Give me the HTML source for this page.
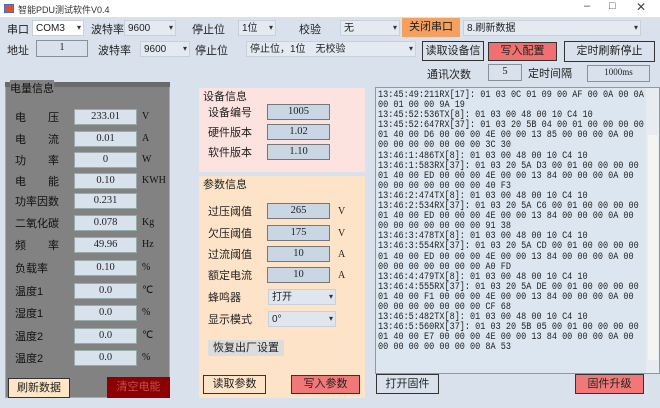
<!DOCTYPE html><html><head><meta charset="utf-8"><style>
*{box-sizing:border-box;margin:0;padding:0}
body{width:660px;height:408px;overflow:hidden;background:#d9e2ec;font-family:"Liberation Sans","Noto Sans CJK SC",sans-serif;font-size:11px;color:#222;position:relative}
.a{position:absolute}
.t{position:absolute;white-space:nowrap}
.cb{position:absolute;background:#e4eaf2;border:1px solid #c8d0da;height:16px;font-size:10px;padding:1px 3px;line-height:13px}
.cb:after{content:"▾";position:absolute;right:2px;top:0;font-size:8px;color:#333}
.box{position:absolute;background:#d5dfea;border:1px solid #8a9098;text-align:center;font-family:"Liberation Serif",serif;font-size:10.5px;line-height:13px;height:16px}
.btn{position:absolute;border:1px solid #333;text-align:center;font-size:11px}
.log{font-family:"Liberation Mono",monospace;font-size:10.4px;line-height:10.1px;white-space:pre;color:#222;transform:scaleX(0.82);transform-origin:0 0}
</style></head><body>
<div class="a" style="left:0;top:0;width:660px;height:17px;background:#fff"></div>
<div class="a" style="left:4px;top:4px;width:10px;height:9px;background:#e05030;border:1px solid #4070c0"></div>
<div class="t" style="left:18px;top:3px;font-size:9px;color:#333">智能PDU测试软件V0.4</div>
<div class="t" style="left:584px;top:0;font-size:11px;color:#444">–</div>
<div class="t" style="left:609px;top:0;font-size:11px;color:#444">□</div>
<div class="t" style="left:636px;top:0;font-size:12px;color:#444">✕</div>

<div class="t" style="left:7px;top:21px">串口</div>
<div class="cb" style="left:32px;top:20px;width:52px;background:#fff">COM3</div>
<div class="t" style="left:91px;top:21px">波特率</div>
<div class="cb" style="left:124px;top:20px;width:52px">9600</div>
<div class="t" style="left:192px;top:21px">停止位</div>
<div class="cb" style="left:238px;top:20px;width:38px">1位</div>
<div class="t" style="left:299px;top:21px">校验</div>
<div class="cb" style="left:340px;top:20px;width:60px">无</div>
<div class="a" style="left:402px;top:18px;width:58px;height:19px;background:#f4a060;text-align:center;line-height:19px">关闭串口</div>
<div class="cb" style="left:463px;top:20px;width:178px">8.刷新数据</div>

<div class="t" style="left:7px;top:42px">地址</div>
<div class="box" style="left:36px;top:40px;width:52px;height:17px;background:#d9e2ec">1</div>
<div class="t" style="left:98px;top:42px">波特率</div>
<div class="cb" style="left:140px;top:41px;width:50px">9600</div>
<div class="t" style="left:195px;top:42px">停止位</div>
<div class="cb" style="left:246px;top:41px;width:170px">停止位，1位　无校验</div>
<div class="btn" style="left:422px;top:41px;width:62px;height:20px;line-height:18px;background:#d9e2ec">读取设备信</div>
<div class="btn" style="left:488px;top:42px;width:69px;height:19px;line-height:17px;background:#f07070">写入配置</div>
<div class="btn" style="left:564px;top:41px;width:91px;height:21px;line-height:19px;background:#d9e2ec">定时刷新停止</div>
<div class="t" style="left:427px;top:66px">通讯次数</div>
<div class="box" style="left:488px;top:64px;width:34px;height:17px;background:#d9e2ec">5</div>
<div class="t" style="left:528px;top:65px">定时间隔</div>
<div class="box" style="left:587px;top:65px;width:63px;height:17px;background:#d9e2ec;font-size:9px">1000ms</div>

<div class="a" style="left:5px;top:82px;width:165px;height:316px;background:#828282;border:1px solid #aaa"></div>
<div class="a" style="left:5px;top:82px;width:165px;height:5px;background:#6a6a6a"></div>
<div class="t" style="left:10px;top:80px;font-size:11px;background:#828282;color:#111">电量信息</div>
<div id="L"></div>
<div class="btn" style="left:8px;top:378px;width:62px;height:20px;line-height:18px;background:#fde6c6">刷新数据</div>
<div class="a" style="left:107px;top:377px;width:63px;height:21px;line-height:21px;background:#8b0000;text-align:center;color:#c05050">清空电能</div>

<div class="a" style="left:199px;top:88px;width:166px;height:84px;background:#fde3df"></div>
<div class="t" style="left:203px;top:88px">设备信息</div>
<div class="a" style="left:199px;top:176px;width:166px;height:222px;background:#fde4c8"></div>
<div class="t" style="left:203px;top:176px">参数信息</div>
<div id="M"></div>
<div class="cb" style="left:268px;top:289px;width:68px;background:#dfe6ee">打开</div>
<div class="cb" style="left:268px;top:311px;width:68px;background:#dfe6ee">0°</div>
<div class="a" style="left:208px;top:340px;width:76px;height:16px;background:#dcdcdc;text-align:center;line-height:16px">恢复出厂设置</div>
<div class="btn" style="left:203px;top:375px;width:63px;height:19px;line-height:17px;background:#fde4c8">读取参数</div>
<div class="btn" style="left:291px;top:375px;width:69px;height:19px;line-height:17px;background:#f07878">写入参数</div>

<div class="a" style="left:375px;top:87px;width:285px;height:287px;background:#dce6f0;border:1px solid #8a9aaa"></div>
<div class="a" style="left:646px;top:88px;width:13px;height:285px;background:#e8ecf0"></div>
<div class="a" style="left:648px;top:135px;width:10px;height:225px;background:#f4f4f4"></div>
<div class="t log" style="left:378px;top:90px">13:45:49:211RX[17]: 01 03 0C 01 09 00 AF 00 0A 00 0A
00 01 00 00 9A 19
13:45:52:536TX[8]: 01 03 00 48 00 10 C4 10
13:45:52:647RX[37]: 01 03 20 5B 04 00 01 00 00 00 00
01 40 00 D6 00 00 00 4E 00 00 13 85 00 00 00 0A 00
00 00 00 00 00 00 00 3C 30
13:46:1:486TX[8]: 01 03 00 48 00 10 C4 10
13:46:1:583RX[37]: 01 03 20 5A D3 00 01 00 00 00 00
01 40 00 ED 00 00 00 4E 00 00 13 84 00 00 00 0A 00
00 00 00 00 00 00 00 40 F3
13:46:2:474TX[8]: 01 03 00 48 00 10 C4 10
13:46:2:534RX[37]: 01 03 20 5A C6 00 01 00 00 00 00
01 40 00 ED 00 00 00 4E 00 00 13 84 00 00 00 0A 00
00 00 00 00 00 00 00 91 38
13:46:3:478TX[8]: 01 03 00 48 00 10 C4 10
13:46:3:554RX[37]: 01 03 20 5A CD 00 01 00 00 00 00
01 40 00 ED 00 00 00 4E 00 00 13 84 00 00 00 0A 00
00 00 00 00 00 00 00 A0 FD
13:46:4:479TX[8]: 01 03 00 48 00 10 C4 10
13:46:4:555RX[37]: 01 03 20 5A DE 00 01 00 00 00 00
01 40 00 F1 00 00 00 4E 00 00 13 84 00 00 00 0A 00
00 00 00 00 00 00 00 CF 68
13:46:5:482TX[8]: 01 03 00 48 00 10 C4 10
13:46:5:560RX[37]: 01 03 20 5B 05 00 01 00 00 00 00
01 40 00 E7 00 00 00 4E 00 00 13 84 00 00 00 0A 00
00 00 00 00 00 00 00 8A 53</div>
<div class="btn" style="left:376px;top:374px;width:63px;height:20px;line-height:18px;background:#d9e2ec">打开固件</div>
<div class="btn" style="left:575px;top:374px;width:69px;height:20px;line-height:18px;background:#f07878">固件升级</div>

<script>
var L=[["电　　压","233.01","V"],["电　　流","0.01","A"],["功　　率","0","W"],["电　　能","0.10","KWH"],["功率因数","0.231",""],["二氧化碳","0.078","Kg"],["频　　率","49.96","Hz"],["负载率","0.10","%"],["温度1","0.0","℃"],["湿度1","0.0","%"],["温度2","0.0","℃"],["温度2","0.0","%"]];
var ys=[117,139,160,181,201,223,245,268,291,313,336,358],h="";
L.forEach(function(r,i){var y=ys[i];h+='<div class="t" style="left:15px;top:'+(y-8)+'px;color:#111">'+r[0]+'</div><div class="box" style="left:74px;top:'+(y-8)+'px;width:63px;background:#d8e2ec;border-color:#9aa">'+r[1]+'</div><div class="t" style="left:142px;top:'+(y-6)+'px;font-family:Liberation Serif,serif;font-size:10px;color:#111">'+r[2]+'</div>';});
document.getElementById("L").innerHTML=h;
var M=[["设备编号","1005","",112],["硬件版本","1.02","",132],["软件版本","1.10","",152],["过压阈值","265","V",211],["欠压阈值","175","V",233],["过流阈值","10","A",254],["额定电流","10","A",275]];h="";
M.forEach(function(r){var y=r[3];h+='<div class="t" style="left:208px;top:'+(y-8)+'px">'+r[0]+'</div><div class="box" style="left:267px;top:'+(y-8)+'px;width:63px;background:#c9d6e4;border-color:#777">'+r[1]+'</div><div class="t" style="left:338px;top:'+(y-5)+'px;font-family:Liberation Serif,serif;font-size:10px">'+r[2]+'</div>';});
h+='<div class="t" style="left:208px;top:289px">蜂鸣器</div><div class="t" style="left:208px;top:311px">显示模式</div>';
document.getElementById("M").innerHTML=h;
</script>
</body></html>
